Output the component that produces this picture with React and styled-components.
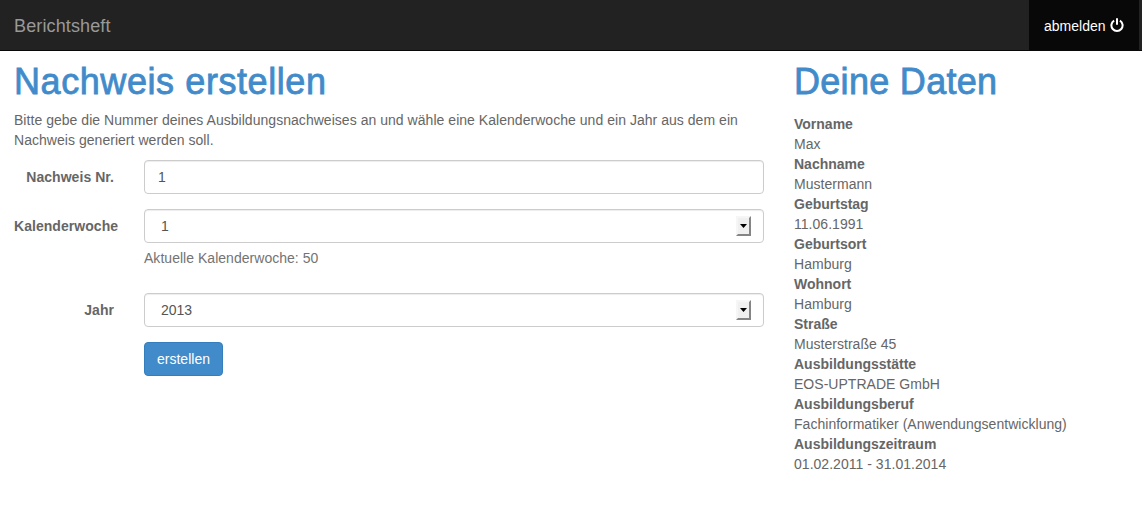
import React from "react";
import styled, { createGlobalStyle } from "styled-components";

const GlobalStyle = createGlobalStyle`
  * { box-sizing: border-box; }
  body {
    margin: 0;
    background: #fff;
    color: #666;
    font: 14px/20px "Helvetica Neue", "Liberation Sans", Helvetica, Arial, sans-serif;
    overflow: hidden;
  }
`;

const Navbar = styled.nav`
  display: flex;
  justify-content: space-between;
  height: 51px;
  padding: 0 3px 0 14px;
  background: #222;
  border-bottom: 1px solid #080808;
`;

const Brand = styled.a`
  padding-top: 16px;
  font-size: 18px;
  line-height: 20px;
  letter-spacing: 0.13px;
  color: #999;
`;

const LogoutLink = styled.a`
  display: flex;
  gap: 4px;
  width: 110px;
  padding: 16px 0 0 15px;
  background: #080808;
  color: #fff;
  line-height: 20px;
  white-space: nowrap;

  svg { display: block; margin-top: 2px; }
`;

const Page = styled.div`
  display: grid;
  grid-template-columns: 750px 1fr;
  column-gap: 30px;
  padding: 0 14px;
`;

const Column = styled.section`
  padding-top: 11px;
`;

const Title = styled.h1`
  margin: 0 0 ${(p) => p.$gap}px;
  color: #428bca;
  font-size: 36px;
  font-weight: 400;
  line-height: 40px;
  letter-spacing: ${(p) => p.$tracking}px;
  -webkit-text-stroke: 0.8px #428bca;
  white-space: nowrap;
`;

const Intro = styled.p`
  margin: 0 0 10px;
`;

const IntroLine = styled.span`
  display: block;
  white-space: nowrap;
  letter-spacing: 0.037px;
`;

const FormRow = styled.div`
  display: grid;
  grid-template-columns: 130px 620px;
  margin-bottom: 15px;
`;

const Label = styled.label`
  padding: 7px 30px 0 0;
  font-weight: 700;
  letter-spacing: 0.05px;
  text-align: right;
  white-space: nowrap;
`;

const WideLabel = styled(Label)`
  padding-right: 0;
  text-align: left;
`;

const Control = styled.div`
  display: flex;
  align-items: center;
  justify-content: space-between;
  height: 34px;
  padding: 0 12px 0 ${(p) => (p.$select ? 16 : 13)}px;
  border: 1px solid #ccc;
  border-radius: 4px;
  background: #fff;
  box-shadow: inset 0 1px 1px rgba(0, 0, 0, 0.075);
  color: #555;
`;

const ArrowButton = styled.span`
  display: flex;
  align-items: center;
  justify-content: center;
  width: 15px;
  height: 20px;
  border: 2px solid;
  border-color: #f6f6f6 #858585 #858585 #f6f6f6;
  background: #f0f0f0;

  svg { display: block; margin-top: -1px; }
`;

const HelpText = styled.p`
  margin: 5px 0 10px;
  color: #737373;
  letter-spacing: 0.03px;
`;

const SubmitButton = styled.button`
  grid-column: 2;
  justify-self: start;
  width: 79px;
  height: 34px;
  padding: 0;
  border: 1px solid #357ebd;
  border-radius: 4px;
  background: #428bca;
  color: #fff;
  font: inherit;
`;

const DataList = styled.dl`
  margin: 0;
`;

const Term = styled.dt`
  font-weight: 700;
`;

const Detail = styled.dd`
  margin: 0;
  letter-spacing: 0.03px;
  white-space: nowrap;
`;

const PowerIcon = () => (
  <svg width="14" height="15" viewBox="0 0 14 15" fill="none" stroke="#fff" strokeWidth="2">
    <path d="M4.1 2.6A5.6 5.6 0 1 0 9.9 2.6" />
    <path d="M7 0.2V6.8" />
  </svg>
);

const Select = ({ value }) => (
  <Control $select>
    <span>{value}</span>
    <ArrowButton>
      <svg width="7" height="4" viewBox="0 0 7 4">
        <path d="M0 0H7L3.5 4Z" fill="#000" />
      </svg>
    </ArrowButton>
  </Control>
);

const data = [
  ["Vorname", "Max"],
  ["Nachname", "Mustermann"],
  ["Geburtstag", "11.06.1991"],
  ["Geburtsort", "Hamburg"],
  ["Wohnort", "Hamburg"],
  ["Straße", "Musterstraße 45"],
  ["Ausbildungsstätte", "EOS-UPTRADE GmbH"],
  ["Ausbildungsberuf", "Fachinformatiker (Anwendungsentwicklung)"],
  ["Ausbildungszeitraum", "01.02.2011 - 31.01.2014"],
];

export default function App() {
  return (
    <>
      <GlobalStyle />
      <Navbar>
        <Brand>Berichtsheft</Brand>
        <LogoutLink>
          abmelden
          <PowerIcon />
        </LogoutLink>
      </Navbar>
      <Page>
        <Column>
          <Title $gap={8} $tracking={0.58}>Nachweis erstellen</Title>
          <Intro>
            <IntroLine>
              Bitte gebe die Nummer deines Ausbildungsnachweises an und wähle eine Kalenderwoche und ein Jahr aus dem ein
            </IntroLine>
            <IntroLine>Nachweis generiert werden soll.</IntroLine>
          </Intro>
          <FormRow>
            <Label>Nachweis Nr.</Label>
            <Control>1</Control>
          </FormRow>
          <FormRow>
            <WideLabel>Kalenderwoche</WideLabel>
            <div>
              <Select value="1" />
              <HelpText>Aktuelle Kalenderwoche: 50</HelpText>
            </div>
          </FormRow>
          <FormRow>
            <Label>Jahr</Label>
            <Select value="2013" />
          </FormRow>
          <FormRow>
            <SubmitButton>erstellen</SubmitButton>
          </FormRow>
        </Column>
        <Column>
          <Title $gap={12} $tracking={0.3}>Deine Daten</Title>
          <DataList>
            {data.map(([term, detail]) => (
              <React.Fragment key={term}>
                <Term>{term}</Term>
                <Detail>{detail}</Detail>
              </React.Fragment>
            ))}
          </DataList>
        </Column>
      </Page>
    </>
  );
}
